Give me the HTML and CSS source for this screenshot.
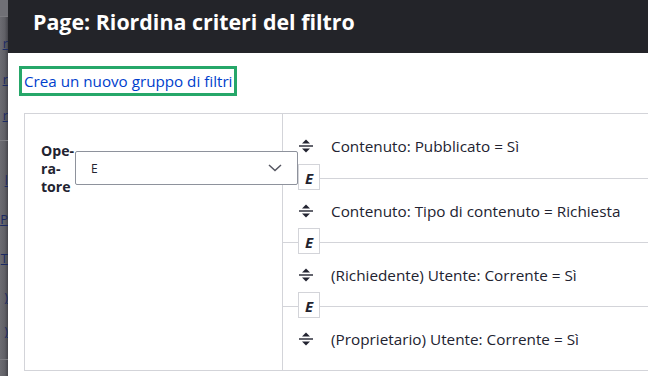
FILE: index.html
```html
<!DOCTYPE html>
<html lang="it">
<head>
<meta charset="utf-8">
<title>Page: Riordina criteri del filtro</title>
<link rel="stylesheet" href="styles.css">
</head>
<body>
<div class="backdrop" aria-hidden="true">
  <div class="bg-top"></div>
  <div class="bg-item bg-a bg-first"><span class="bg-link">r</span></div>
  <div class="bg-item bg-a"><span class="bg-link">r</span></div>
  <div class="bg-item bg-a"><span class="bg-link">r</span></div>
  <div class="bg-rule"></div>
  <div class="bg-item bg-b"><span class="bg-link">l</span></div>
  <div class="bg-item bg-c"><span class="bg-link">P</span></div>
  <div class="bg-item bg-d"><span class="bg-link">T</span></div>
  <div class="bg-item bg-e"><span class="bg-link">)</span></div>
  <div class="bg-item bg-f"><span class="bg-link">)</span></div>
  <div class="bg-rule bg-rule-low"></div>
</div>
<div class="dialog">
  <div class="dialog-title">Page: Riordina criteri del filtro</div>
  <div class="dialog-body">
    <div class="link-wrap"><a class="new-group" href="#">Crea un nuovo gruppo di filtri</a></div>
    <div class="filter-table">
      <div class="op-cell">
        <div class="op-field">
          <label class="op-label">Ope-<br>ra-<br>tore</label>
          <div class="op-select">
            <span>E</span>
            <svg class="chevron" width="14" height="8" viewBox="0 0 14 8"><path d="M1 1l6 5.5L13 1" fill="none" stroke="#545560" stroke-width="1.5"/></svg>
          </div>
        </div>
      </div>
      <div class="rows">
        <div class="row">
          <svg class="handle" width="14" height="14" viewBox="0 0 14 14"><path d="M3 4.6h8L7 0.6z M3 9.4h8L7 13.4z" fill="#222330"/><rect x="0" y="6.3" width="14" height="1.4" fill="#222330"/></svg>
          <span class="row-text">Contenuto: Pubblicato = Sì</span>
          <span class="op-badge">E</span>
        </div>
        <div class="row">
          <svg class="handle" width="14" height="14" viewBox="0 0 14 14"><path d="M3 4.6h8L7 0.6z M3 9.4h8L7 13.4z" fill="#222330"/><rect x="0" y="6.3" width="14" height="1.4" fill="#222330"/></svg>
          <span class="row-text">Contenuto: Tipo di contenuto = Richiesta</span>
          <span class="op-badge">E</span>
        </div>
        <div class="row">
          <svg class="handle" width="14" height="14" viewBox="0 0 14 14"><path d="M3 4.6h8L7 0.6z M3 9.4h8L7 13.4z" fill="#222330"/><rect x="0" y="6.3" width="14" height="1.4" fill="#222330"/></svg>
          <span class="row-text">(Richiedente) Utente: Corrente = Sì</span>
          <span class="op-badge">E</span>
        </div>
        <div class="row">
          <svg class="handle" width="14" height="14" viewBox="0 0 14 14"><path d="M3 4.6h8L7 0.6z M3 9.4h8L7 13.4z" fill="#222330"/><rect x="0" y="6.3" width="14" height="1.4" fill="#222330"/></svg>
          <span class="row-text">(Proprietario) Utente: Corrente = Sì</span>
        </div>
      </div>
    </div>
  </div>
</div>
</body>
</html>
```
FILE: styles.css
```css
html, body {
  margin: 0;
  padding: 0;
  height: 376px;
  overflow: hidden;
}
body {
  display: flex;
  font-family: "Open Sans", sans-serif;
  color: #222330;
  background: #ffffff;
}

/* dimmed page behind the modal */
.backdrop {
  width: 8px;
  flex: none;
  overflow: hidden;
  display: flex;
  flex-direction: column;
  background: linear-gradient(to right, #6c6c72 0, #606066 60%, #45454b 100%);
}
.bg-top {
  height: 16px;
  flex: none;
  border-bottom: 1px solid #7b7b80;
  background: #707076;
}
.bg-item {
  flex: none;
  display: flex;
  justify-content: flex-end;
  align-items: center;
  white-space: nowrap;
  font-size: 13px;
}
.bg-first { margin-top: 8px; }
.bg-a { height: 36px; }
.bg-b { height: 42px; margin-top: 18px; }
.bg-c { height: 36px; }
.bg-d { height: 42px; }
.bg-e { height: 36px; }
.bg-f { height: 32px; }
.bg-link {
  color: #1c2a63;
  text-decoration: underline;
}
.bg-rule {
  flex: none;
  height: 0;
  border-top: 1px solid #7d7d82;
  margin-top: 7px;
}
.bg-rule-low { margin-top: 12px; }

/* dialog */
.dialog {
  flex: 1;
  min-width: 0;
  overflow: hidden;
  background: #ffffff;
}
.dialog-title {
  height: 53px;
  box-sizing: border-box;
  padding: 7px 0 0 25px;
  background: #232429;
  color: #ffffff;
  font-weight: 700;
  font-size: 21.4px;
  white-space: nowrap;
}
.dialog-body {
  padding: 0 0 0 16px;
}
.link-wrap {
  padding-top: 17px;
  height: 20px;
}
.new-group {
  display: inline-block;
  font-size: 15.2px;
  line-height: 20px;
  color: #003ecc;
  text-decoration: none;
  outline: 3px solid #26a769;
  outline-offset: 2px;
}

.filter-table {
  margin-top: 23px;
  width: 720px;
  display: flex;
  border: 1px solid #d3d4d9;
}
.op-cell {
  width: 241px;
  flex: none;
  padding: 28px 0 0 16px;
  border-right: 1px solid #d3d4d9;
}
.op-field {
  display: flex;
  align-items: flex-start;
}
.op-label {
  width: 34px;
  flex: none;
  font-weight: 700;
  font-size: 14.1px;
  line-height: 18px;
}
.op-select {
  position: relative;
  z-index: 2;
  flex: none;
  width: 223px;
  height: 34px;
  box-sizing: border-box;
  margin-top: 9px;
  padding: 0 15px 0 15px;
  display: flex;
  align-items: center;
  justify-content: space-between;
  border: 1px solid #8e929c;
  border-radius: 2px;
  background: #ffffff;
  font-size: 12px;
}
.chevron { display: block; }

.rows {
  flex: 1;
  display: flex;
  flex-direction: column;
}
.row {
  position: relative;
  height: 63px;
  display: flex;
  align-items: center;
  padding-left: 16px;
  border-bottom: 1px solid #d3d4d9;
}
.row:first-child { height: 64px; }
.row:last-child { border-bottom: 0; }
.handle {
  flex: none;
  display: block;
  margin-right: 18px;
}
.row-text {
  font-size: 15.3px;
  white-space: nowrap;
}
.op-badge {
  position: absolute;
  z-index: 1;
  left: 15px;
  bottom: -12px;
  width: 22px;
  height: 26px;
  box-sizing: border-box;
  border: 1px solid #d3d4d9;
  background: #ffffff;
  display: flex;
  align-items: center;
  justify-content: center;
  font-weight: 700;
  font-style: italic;
  font-size: 15px;
  line-height: 1;
  padding-top: 2px;
}
```
